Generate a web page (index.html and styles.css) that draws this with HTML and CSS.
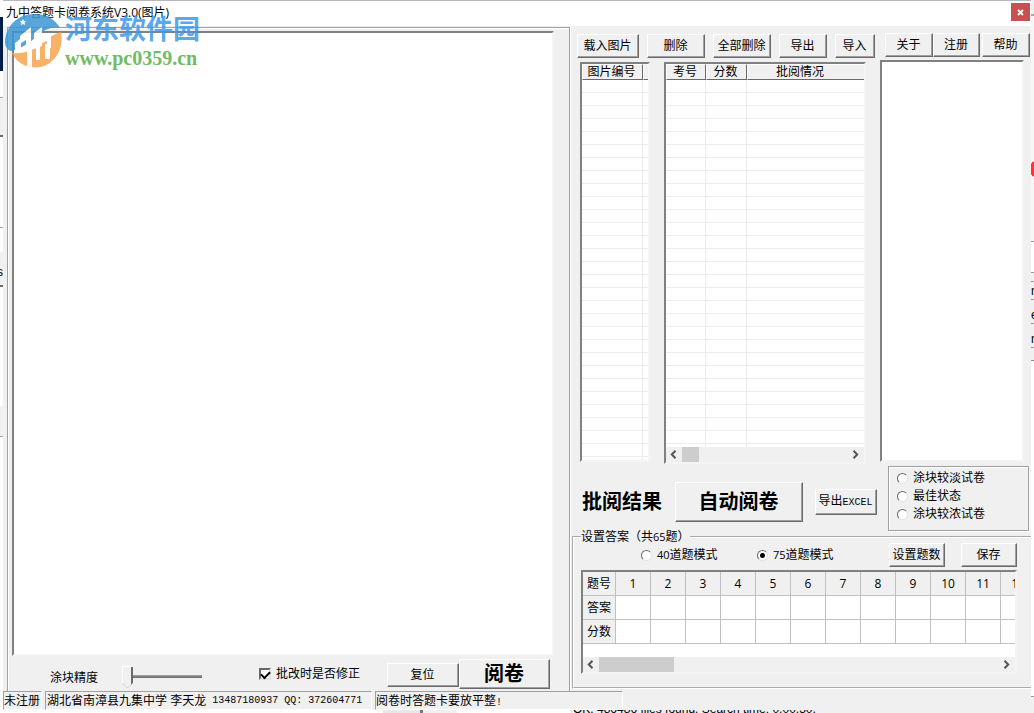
FILE: index.html
```html
<!DOCTYPE html>
<html lang="zh-CN">
<head>
<meta charset="utf-8">
<title>九中答题卡阅卷系统V3.0(图片)</title>
<link rel="stylesheet" href="styles.css">
</head>
<body>
<div class="desktop">
  <div class="strip strip-left"><span class="strip-char">s</span></div>
  <div class="window">
    <header class="titlebar">
      <span class="title">九中答题卡阅卷系统V3.0(图片)</span>
      <button class="close" aria-label="关闭"><svg width="7" height="7" viewBox="0 0 7 7"><path d="M1 1l5 5M6 1L1 6" stroke="#fff" stroke-width="1.8"/></svg></button>
    </header>
    <main class="main">
      <section class="viewer">
        <div class="sheet sunken"></div>
        <div class="controls">
          <label class="precision" for="precision">涂块精度</label>
          <input class="slider" id="precision" type="range" min="0" max="10" value="0">
          <label class="check-label"><input class="check" type="checkbox" checked>批改时是否修正</label>
          <button class="btn reset">复位</button>
          <button class="btn grade">阅卷</button>
        </div>
      </section>
      <section class="side">
        <div class="upper">
          <div class="lists-col">
            <div class="toolbar">
              <button class="btn w62">载入图片</button>
              <button class="btn w58">删除</button>
              <button class="btn w58">全部删除</button>
              <button class="btn w48">导出</button>
              <button class="btn w40">导入</button>
            </div>
            <div class="lists">
              <div class="list list-pics sunken">
                <table class="lined">
                  <colgroup><col class="c-pic"><col></colgroup>
                  <thead><tr><th>图片编号</th><th></th></tr></thead>
                  <tbody class="rows"></tbody>
                </table>
              </div>
              <div class="list list-results sunken">
                <div class="list-body">
                  <table class="lined">
                    <colgroup><col class="c-no"><col class="c-score"><col></colgroup>
                    <thead><tr><th>考号</th><th>分数</th><th class="status-head">批阅情况</th></tr></thead>
                    <tbody class="rows"></tbody>
                  </table>
                </div>
                <div class="scroll">
                  <svg class="arrow" viewBox="0 0 7 9"><path d="M5.5 .8L1.8 4.5l3.7 3.7"/></svg>
                  <span class="thumb thumb-small"></span>
                  <svg class="arrow arrow-right" viewBox="0 0 7 9"><path d="M1.5 .8l3.7 3.7-3.7 3.7"/></svg>
                </div>
              </div>
            </div>
            <div class="actions">
              <strong class="result-label">批阅结果</strong>
              <button class="btn auto">自动阅卷</button>
              <button class="btn export">导出<span class="mono">EXCEL</span></button>
            </div>
          </div>
          <div class="log-col">
            <div class="toolbar-right">
              <button class="btn w48">关于</button><button class="btn w47">注册</button><button class="btn w48 help">帮助</button>
            </div>
            <div class="log sunken"></div>
            <div class="density">
              <label class="radio-label"><input class="radio" type="radio" name="density">涂块较淡试卷</label>
              <label class="radio-label"><input class="radio" type="radio" name="density">最佳状态</label>
              <label class="radio-label"><input class="radio" type="radio" name="density">涂块较浓试卷</label>
            </div>
          </div>
        </div>
        <fieldset class="answers">
          <legend>设置答案（共<span class="digits">65</span>题）</legend>
          <div class="mode-row">
            <label class="radio-label mode-40"><input class="radio" type="radio" name="mode"><span><span class="digits">40</span>道题模式</span></label>
            <label class="radio-label mode-75"><input class="radio" type="radio" name="mode" checked><span><span class="digits">75</span>道题模式</span></label>
            <button class="btn w56 set-count">设置题数</button>
            <button class="btn w56">保存</button>
          </div>
          <div class="grid sunken">
            <div class="grid-body">
              <table class="answer-table">
                <tr><th class="row-head">题号</th><th>1</th><th>2</th><th>3</th><th>4</th><th>5</th><th>6</th><th>7</th><th>8</th><th>9</th><th>10</th><th>11</th><th>12</th></tr>
                <tr><th class="row-head">答案</th><td></td><td></td><td></td><td></td><td></td><td></td><td></td><td></td><td></td><td></td><td></td><td></td></tr>
                <tr><th class="row-head">分数</th><td></td><td></td><td></td><td></td><td></td><td></td><td></td><td></td><td></td><td></td><td></td><td></td></tr>
              </table>
            </div>
            <div class="scroll">
              <svg class="arrow" viewBox="0 0 7 9"><path d="M5.5 .8L1.8 4.5l3.7 3.7"/></svg>
              <span class="thumb thumb-wide"></span>
              <svg class="arrow arrow-right" viewBox="0 0 7 9"><path d="M1.5 .8l3.7 3.7-3.7 3.7"/></svg>
            </div>
          </div>
        </fieldset>
      </section>
    </main>
    <footer class="statusbar">
      <div class="panel p-reg">未注册</div>
      <div class="panel p-school"><span>湖北省南漳县九集中学 李天龙</span><span class="mono">13487180937 QQ: 372604771</span></div>
      <div class="panel p-tip">阅卷时答题卡要放平整<span class="mono">!</span></div>
    </footer>
  </div>
  <div class="strip strip-right"><span>n</span><span>e</span><span>n</span></div>
  <div class="behind"><span>OK. 486486 files found. Search time: 0.00.30.</span></div>
</div>
<div class="watermark">
  <svg class="logo" viewBox="0 0 58 56">
    <path d="M0 29C1 12 13 1 30 1c11 0 20 5 25 14-10-2-17 3-24 9C21 33 12 37 6 38 3 37 0 34 0 29z" fill="#3b97d4"/>
    <path d="M56 19c3 17-6 32-21 35-13 2-23-4-28-14 11 1 20-2 28-8 7-6 13-11 21-13z" fill="#f7a44d"/>
    <path d="M10 30l5-4v-3l11-9v21l-5 1v-9l-5 3v5l9-1v3L10 37z" fill="#fff"/>
    <path d="M29 20l8-6v19l-8 3z" fill="#fff"/>
    <path d="M37 24l9-3v14l-4 2v-9l-5 2z" fill="#fff"/>
    <path d="M22 37h5v17l-5-1zM31 34h4v13h-4zM40 31h5v15h-5z" fill="#fff"/>
    <path d="M18 6l1 2 2.200.3-1.600 1.500.4 2.200-2-1-2 1 .4-2.200-1.600-1.500 2.200-.3z" fill="#fff"/>
  </svg>
  <div class="mark-text"><div class="mark-name">河东软件园</div><div class="mark-url">www.pc0359.cn</div></div>
</div>
<script src="rows.js"></script>
</body>
</html>
```
FILE: styles.css
```css
* { box-sizing: border-box; }

body {
  margin: 0;
  background: #fff;
  color: #000;
  font: 12px/16px "Liberation Sans", "Noto Sans CJK SC", sans-serif;
}

button, input { font: inherit; color: inherit; margin: 0; }

.desktop {
  display: grid;
  grid-template-columns: 3px minmax(0, 1fr) 3px;
  grid-template-rows: minmax(0, 1fr) 3px;
  height: 100vh;
  min-height: 713px;
  overflow: hidden;
}

.strip { overflow: hidden; }

.strip-left {
  padding-top: 264px;
  background: linear-gradient(#fff 17px, #001c48 17px 71px, #fff 71px 97px, #a0a0a0 97px 98px, #f0f0f0 98px 135px, #696969 135px 137px, #fff 137px 227px, #a0a0a0 227px 228px, #fff 228px 252px, #f0f0f0 252px 285px, #696969 285px 287px, #fff 287px 406px, #f0f0f0 406px 436px, #a0a0a0 436px 437px, #fff 437px);
}

.strip-char { margin-left: -3px; }

.strip-right {
  display: flex;
  flex-direction: column;
  gap: 8px;
  padding-top: 283px;
  background: radial-gradient(ellipse 4px 8px at 3px 169px, #f33 90%, transparent), linear-gradient(#f0f0f0 14px, #aaa 14px 16px, #f6f6f6 16px 241px, #999 241px 242px, #fff 242px 272px, #999 272px 273px, #f0f0f0 273px 281px, #999 281px 282px, #f0f0f0 282px 299px, #999 299px 300px, #f0f0f0 300px 323px, #999 323px 324px, #f0f0f0 324px 347px, #999 347px 348px, #f0f0f0 348px 360px, #888 360px 361px, #fff 361px 696px, #999 696px 697px, #f0f0f0 697px);
}

.behind {
  grid-column: 1 / -1;
  display: flex;
  align-items: flex-end;
  padding-left: 573px;
  overflow: hidden;
  line-height: 8px;
  background: linear-gradient(90deg, #fff 383px, #e8e8e8 383px 420px, #777 420px 423px, #f0f0f0 423px 457px, #fff 457px 570px, #f0f0f0 570px);
}

.window {
  display: flex;
  flex-direction: column;
  min-width: 0;
  background: #f0f0f0;
}

.titlebar {
  display: flex;
  justify-content: space-between;
  flex: none;
  height: 26px;
  padding: 2px 1px 0 3px;
  background: #fff;
  border-top: 1px solid #b8b8bc;
}

.title { font-family: "Open Sans", "Noto Sans CJK SC", sans-serif; line-height: 20px; }

.close {
  display: flex;
  align-items: center;
  justify-content: center;
  width: 19px;
  height: 18px;
  padding: 0;
  border: 0;
  background: #c75050;
}

.main {
  flex: 1;
  display: grid;
  grid-template-columns: minmax(0, 1fr) 461px;
  min-height: 0;
}

.sunken {
  background: #fff;
  border: 2px solid;
  border-color: #808080 #f4f4f4 #f4f4f4 #808080;
}

.viewer {
  display: flex;
  flex-direction: column;
  margin: 1px 0 0 4px;
  padding: 3px 15px 0 4px;
  border: 1px solid #a0a0a0;
  border-bottom: 0;
  box-shadow: inset 1px 1px #fff, 1px 0 #fff;
}

.sheet { flex: 1; }

.controls {
  display: flex;
  height: 35px;
  padding: 1px 3px 4px 38px;
}

.precision { width: 72px; line-height: 42px; }

.slider {
  appearance: none;
  width: 80px;
  height: 22px;
  margin-top: 9px;
  background: linear-gradient(#a0a0a0, #696969) 8px 9px / 72px 3px no-repeat;
}

.slider::-webkit-slider-thumb {
  appearance: none;
  width: 11px;
  height: 22px;
  background: #696969;
  clip-path: polygon(0 0, 100% 0, 100% 76%, 50% 100%, 0 76%);
  border: 0;
  box-shadow: inset 1px 1px #fff, inset -2px 0 #696969, inset 0 0 0 10px #f0f0f0;
}

.check-label {
  display: flex;
  align-items: center;
  gap: 5px;
  width: 128px;
  height: 34px;
  margin-left: 57px;
}

.check {
  appearance: none;
  width: 12px;
  height: 12px;
  background: #fff;
  border: 2px solid;
  border-color: #696969 #e3e3e3 #e3e3e3 #696969;
}

.check:checked::before {
  content: "";
  display: block;
  width: 7px;
  height: 4px;
  margin-top: 1px;
  border: solid #000;
  border-width: 0 0 2px 2px;
  transform: rotate(-45deg);
}

.btn {
  flex: none;
  height: 24px;
  padding: 0 1px 0 0;
  background: #f0f0f0;
  border: 1px solid;
  border-color: #fff #696969 #696969 #fff;
  box-shadow: inset -1px -1px #a0a0a0;
  line-height: 16px;
  white-space: nowrap;
}

.w62 { width: 62px; }
.w58 { width: 58px; }
.w56 { width: 56px; }
.w48 { width: 48px; }
.w47 { width: 47px; }
.w40 { width: 40px; }

.reset { width: 72px; margin: 6px 0 0; }
.grade { width: 91px; height: 30px; margin-top: 2px; font-size: 20px; font-weight: bold; }

.side { min-width: 0; overflow: hidden; }

.upper { display: flex; }

.lists-col { width: 310px; padding: 8px 0 0 7px; }

.toolbar { display: flex; gap: 8px; }

.lists {
  display: flex;
  align-items: flex-start;
  gap: 14px;
  margin-top: 4px;
  padding-left: 3px;
}

.list { overflow: hidden; }
.list-pics { width: 70px; height: 400px; }
.list-results { width: 202px; height: 402px; display: flex; flex-direction: column; }
.list-body { flex: 1; min-height: 0; overflow: hidden; }

.lined {
  width: 100%;
  table-layout: fixed;
  border-collapse: separate;
  border-spacing: 0;
}

.c-pic { width: 61px; }
.c-no { width: 40px; }
.c-score { width: 41px; }

.lined th {
  height: 16px;
  padding: 0 2px 0 0;
  background: #f0f0f0;
  border: 1px solid;
  border-color: #fff #696969 #696969 #fff;
  font-weight: normal;
  line-height: 14px;
  white-space: nowrap;
}

.lined th:last-child { border-right: 0; }
.lined .status-head { padding-right: 12px; }

.lined td {
  height: 13px;
  padding: 0;
  border-right: 1px solid #ececec;
  border-bottom: 1px solid #ececec;
}

.lined td:last-child { border-right: 0; }

.scroll {
  display: flex;
  align-items: center;
  flex: none;
  height: 15px;
  background: #f0f0f0;
}

.arrow { width: 7px; height: 9px; margin: 0 5px 0 4px; fill: none; stroke: #555; stroke-width: 2; }
.arrow-right { margin-left: auto; }
.thumb { height: 15px; background: #cdcdcd; }
.thumb-small { width: 17px; }
.thumb-wide { width: 75px; }

.actions {
  display: flex;
  align-items: center;
  height: 40px;
  margin-top: 18px;
  padding-left: 5px;
}

.result-label { width: 93px; font-size: 20px; line-height: 24px; white-space: nowrap; }
.auto { width: 128px; height: 40px; margin-right: 12px; font-size: 20px; font-weight: bold; }
.export { width: 62px; height: 26px; }
.mono { font-family: "Liberation Mono", monospace; font-size: 10px; }
.digits { font-family: "Open Sans", sans-serif; font-size: 11px; }

.log-col { flex: 1; padding-top: 7px; }
.toolbar-right { display: flex; padding-left: 5px; }
.help { margin-left: 2px; }
.log { width: 144px; height: 402px; margin-top: 3px; }

.density {
  width: 141px;
  height: 65px;
  margin: 4px 0 0 8px;
  padding: 2px 8px;
  border: 1px solid #a0a0a0;
  box-shadow: inset 1px 1px #fff, 1px 1px #fff;
}

.radio-label {
  display: flex;
  align-items: center;
  gap: 5px;
  height: 18px;
  white-space: nowrap;
}

.radio {
  appearance: none;
  flex: none;
  width: 11px;
  height: 11px;
  background: #fff;
  border: 1px solid;
  border-color: #696969 #e3e3e3 #e3e3e3 #696969;
  border-radius: 50%;
}

.radio:checked { background: radial-gradient(circle, #000 2px, #fff 3px); }

.answers {
  min-width: 0;
  margin: 0 0 0 2px;
  padding: 0 13px 13px 7px;
  border: 2px groove #fff;
  border-right: 0;
}

.answers legend { height: 12px; padding: 0; line-height: 12px; }

.mode-row { display: flex; height: 27px; }
.mode-40 { margin-top: 3px; margin-left: 60px; width: 116px; }
.mode-75 { margin-top: 3px; width: 132px; }
.set-count { margin-right: 16px; }

.grid { height: 104px; width: 436px; display: flex; flex-direction: column; }
.grid-body { flex: 1; min-height: 0; overflow: hidden; }

.answer-table {
  width: 453px;
  table-layout: fixed;
  border-collapse: separate;
  border-spacing: 0;
  font-family: "Open Sans", "Noto Sans CJK SC", sans-serif;
}

.answer-table th, .answer-table td {
  height: 24px;
  padding: 0;
  border-right: 1px solid #c0c0c0;
  border-bottom: 1px solid #c0c0c0;
  font-weight: normal;
  line-height: 16px;
}

.answer-table th { background: #f0f0f0; }
.answer-table .row-head { width: 33px; }

.statusbar {
  display: flex;
  gap: 3px;
  flex: none;
  height: 19px;
}

.panel {
  padding-left: 1px;
  border: 1px solid;
  border-color: #a0a0a0 #fff #fff #a0a0a0;
  line-height: 18px;
  white-space: nowrap;
}

.p-reg { width: 39px; padding-left: 0; }
.p-school { display: flex; gap: 6px; width: 327px; }
.p-tip { width: 248px; padding-left: 0; }

.watermark {
  position: absolute;
  left: 5px;
  top: 13px;
  display: flex;
  gap: 2px;
  opacity: .85;
  pointer-events: none;
}

.logo { width: 58px; height: 56px; }
.mark-name { color: #3d9be9; font-size: 27px; font-weight: bold; line-height: 35px; }
.mark-url { color: #58b148; font: bold 20px/20px "Liberation Serif", serif; }
```
FILE: rows.js
```js
document.querySelectorAll(".rows").forEach(function (body) {
  var columns = body.parentElement.querySelectorAll("th").length;
  for (var i = 0; i < 30; i++) {
    var row = body.insertRow();
    for (var c = 0; c < columns; c++) row.insertCell();
  }
});
```
